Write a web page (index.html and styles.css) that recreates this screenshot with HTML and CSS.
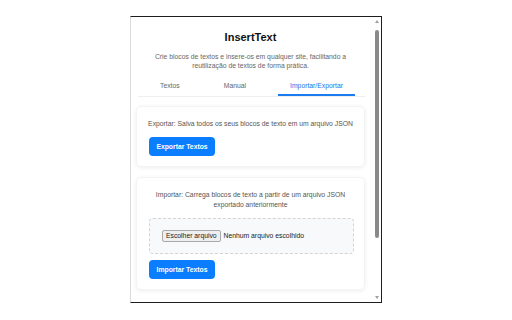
FILE: index.html
```html
<!DOCTYPE html>
<html lang="pt">
<head>
    <meta charset="UTF-8">
    <title>InsertText</title>
    <link rel="stylesheet" href="styles.css">
</head>
<body>
    <div class="popup">
        <div class="content">
            <h1>InsertText</h1>
            <p class="subtitle">Crie blocos de textos e insere-os em qualquer site, facilitando a reutilização de textos de forma prática.</p>

            <div class="tabs">
                <button class="tab">Textos</button>
                <button class="tab">Manual</button>
                <button class="tab active">Importar/Exportar</button>
            </div>

            <div class="card">
                <p>Exportar: Salva todos os seus blocos de texto em um arquivo JSON</p>
                <button class="btn">Exportar Textos</button>
            </div>

            <div class="card">
                <p>Importar: Carrega blocos de texto a partir de um arquivo JSON exportado anteriormente</p>
                <div class="drop">
                    <label class="file"><span class="file-btn">Escolher arquivo</span> Nenhum arquivo escolhido</label>
                </div>
                <button class="btn">Importar Textos</button>
            </div>
        </div>
        <div class="scrollbar">
            <div class="arrow up"></div>
            <div class="track"><div class="thumb"></div></div>
            <div class="arrow down"></div>
        </div>
    </div>
</body>
</html>
```

FILE: styles.css
```css
body { margin: 0; padding-top: 16px; background: #fff; font-family: "Liberation Sans", Arial, sans-serif; }
.popup { width: 252px; height: 287px; margin: 0 auto; box-sizing: border-box; display: flex; overflow: hidden;
    border: 1px solid #1e1e1e; border-left-color: #dcdcdc; background: #fff; }
.content { flex: 1; padding: 14px 7px 0 5px; text-align: center; }
h1 { margin: 0; font-size: 11px; line-height: 13px; color: #111; }
.subtitle { margin: 8px 12px 0; font-size: 6.8px; line-height: 9px; color: #666; }

.tabs { display: flex; margin: 5px 0 0 2px; border-bottom: 1px solid #eee; }
.tab { flex: 1 1 auto; position: relative; background: none; border: none; padding: 6px 0; font-family: inherit;
    font-size: 6.8px; line-height: 9px; color: #666; cursor: pointer; }
.tab.active { color: #1a73e8; }
.tab.active::after { content: ""; position: absolute; left: 10%; right: 10%; bottom: 0; height: 2px; background: #1a7cf0; }

.card { margin-top: 9px; padding: 12px 10px 10px; border: 1px solid #f3f3f3; border-radius: 5px;
    box-shadow: 0 1px 4px rgba(0,0,0,0.07); }
.card + .card { margin-top: 10px; }
.card p { margin: 0 0 8px; font-size: 6.8px; line-height: 10px; color: #555; }
.btn { display: block; width: 66px; height: 19px; margin-left: 2px; padding: 0; border: none; border-radius: 4px; background: #0b7dff;
    color: #fff; font-family: inherit; font-size: 6.8px; font-weight: bold; cursor: pointer; }

.drop { margin: 0 0 6px 2px; padding: 11px 12px; border: 1px dashed #d4d4d4; border-radius: 4px; background: #f8f9fa; text-align: left; }
.file { display: flex; align-items: center; font-size: 6.8px; line-height: 10px; color: #222; white-space: pre; }
.file-btn { display: inline-block; height: 10px; padding: 0 3px; margin-right: 1px; border: 1px solid #a9a9a9; border-radius: 2px;
    background: #efefef; }

.scrollbar { width: 9px; display: flex; flex-direction: column; align-items: center; }
.arrow { width: 0; height: 0; border-left: 2.5px solid transparent; border-right: 2.5px solid transparent; margin: 3px 0; }
.arrow.up { border-bottom: 3px solid #a0a0a0; }
.arrow.down { border-top: 3px solid #a0a0a0; }
.track { flex: 1; width: 100%; display: flex; justify-content: center; padding-top: 4px; }
.thumb { width: 4px; height: 208px; border-radius: 2px; background: #8a8a8a; }
```
